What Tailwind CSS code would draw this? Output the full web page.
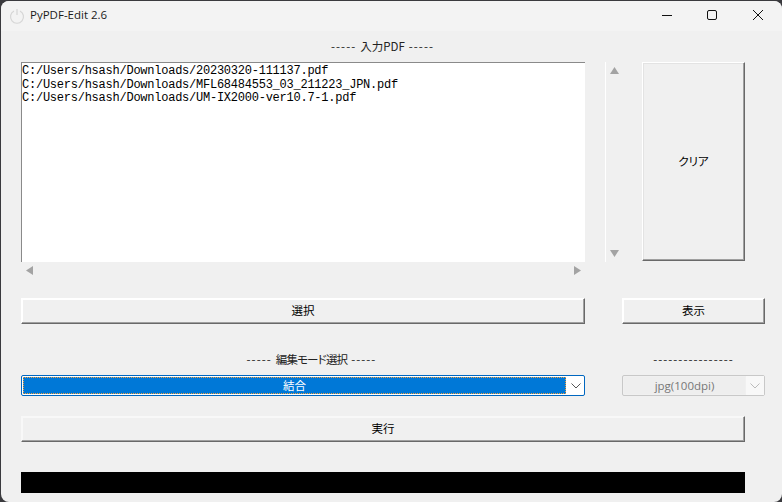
<!DOCTYPE html>
<html lang="ja">
<head>
  <meta charset="UTF-8" />
  <title>PyPDF-Edit 2.6</title>
  <script src="https://cdn.jsdelivr.net/npm/@tailwindcss/browser@4"></script>
</head>
<body class="w-[782px] h-[502px] overflow-hidden bg-[#3a3a3e] font-['Noto_Sans_CJK_JP','Noto_Sans',sans-serif] [font-feature-settings:'palt'] text-[12px] text-black">

  <div class="w-[781px] h-[501px] ml-px mt-px rounded-[8px] overflow-hidden bg-[#f0f0f0] flex flex-col">

    <!-- Title bar -->
    <header class="h-[30px] shrink-0 bg-[#f3f3f3] flex items-center">
      <svg class="ml-[8px] w-[16px] h-[16px]" viewBox="0 0 16 16" fill="none" stroke="#d6d6d6" stroke-width="1.2">
        <path d="M5 3 A6.5 6.5 0 1 0 11 3" />
        <path d="M8 1 V7" />
      </svg>
      <span class="ml-[5px] pb-[2px] font-['Open_Sans',sans-serif] text-[11.5px] text-[#1a1a1a] leading-none">PyPDF-Edit 2.6</span>
      <div class="ml-auto mr-px flex items-center">
        <svg class="w-[46px] h-[30px]" viewBox="0 0 46 30" fill="none" stroke="#111" stroke-width="1"><path d="M19 14.5 H29" /></svg>
        <svg class="w-[46px] h-[30px]" viewBox="0 0 46 30" fill="none" stroke="#111" stroke-width="1"><rect x="18.5" y="9.5" width="9" height="9" rx="1.5" /></svg>
        <svg class="w-[46px] h-[30px]" viewBox="0 0 46 30" fill="none" stroke="#111" stroke-width="1"><path d="M18 9 L28 19 M28 9 L18 19" /></svg>
      </div>
    </header>

    <main class="flex-1 pl-[20px] flex flex-col">
      <!-- Input heading -->
      <div class="h-[31px] pr-[38px] flex items-center justify-center text-[11.5px] leading-none text-[#222] pt-[1px]">
        <span class="tracking-[1.05px]">-----</span><span class="mx-[4px]">入力PDF</span><span class="tracking-[1.05px]">-----</span>
      </div>

      <!-- List + vertical scrollbar + clear button -->
      <div class="flex h-[200px]">
        <div class="w-[564px] border-t border-l border-t-[#8a8a8a] border-l-[#8a8a8a] bg-white font-['Liberation_Mono',monospace] text-[12px] tracking-[-0.24px] leading-[13.5px] pt-[2px] whitespace-nowrap overflow-hidden">
          <div>C:/Users/hsash/Downloads/20230320-111137.pdf</div>
          <div>C:/Users/hsash/Downloads/MFL68484553_03_211223_JPN.pdf</div>
          <div>C:/Users/hsash/Downloads/UM-IX2000-ver10.7-1.pdf</div>
        </div>
        <div class="w-[20px] ml-[20px] border-l border-white flex flex-col items-center justify-between py-[5px] pr-[2px]">
          <svg class="w-[9px] h-[7px]" viewBox="0 0 9 7" fill="#a3a3a3"><path d="M4.5 0 L9 7 H0 Z" /></svg>
          <svg class="w-[9px] h-[7px]" viewBox="0 0 9 7" fill="#a3a3a3"><path d="M0 0 H9 L4.5 7 Z" /></svg>
        </div>
        <button class="w-[103px] h-[199px] ml-[17px] bg-[#f0f0f0] border border-t-white border-l-white border-r-[#696969] border-b-[#696969] shadow-[inset_-1px_-1px_0_#a0a0a0,inset_1px_1px_0_#e3e3e3] text-[11.5px]">クリア</button>
      </div>

      <!-- Horizontal scrollbar -->
      <div class="w-[564px] h-[16px] flex items-center justify-between pl-[5px] pr-[4px]">
        <svg class="w-[7px] h-[9px]" viewBox="0 0 7 9" fill="#a3a3a3"><path d="M7 0 V9 L0 4.5 Z" /></svg>
        <svg class="w-[7px] h-[9px]" viewBox="0 0 7 9" fill="#a3a3a3"><path d="M0 0 L7 4.5 L0 9 Z" /></svg>
      </div>

      <!-- Select / show buttons -->
      <div class="flex mt-[20px] h-[26px]">
        <button class="w-[564px] bg-[#f0f0f0] border border-t-white border-l-white border-r-[#696969] border-b-[#696969] shadow-[inset_-1px_-1px_0_#a0a0a0,inset_1px_1px_0_#fff] text-[11.5px]">選択</button>
        <button class="w-[143px] ml-[37px] bg-[#f0f0f0] border border-t-white border-l-white border-r-[#696969] border-b-[#696969] shadow-[inset_-1px_-1px_0_#a0a0a0,inset_1px_1px_0_#fff] text-[11.5px]">表示</button>
      </div>

      <!-- Mode labels -->
      <div class="flex mt-[21px] h-[30px] items-center text-[11.5px] leading-none text-[#222] pb-[1px]">
        <div class="w-[581px] text-center">
          <span class="tracking-[1.05px]">-----</span><span class="mx-[4px] tracking-[-0.85px]">編集モード選択</span><span class="tracking-[1.05px]">-----</span>
        </div>
        <div class="w-[143px] ml-[20px] text-center tracking-[1.05px]">----------------</div>
      </div>

      <!-- Mode selects -->
      <div class="flex h-[21px]">
        <div class="w-[564px] border border-[#0067c0] rounded-[2px] bg-white flex items-stretch">
          <div class="flex-1 m-px bg-[#0078d7] border border-dotted border-[#f0a040] text-white text-[11.5px] flex items-center justify-center pt-[1px]">結合</div>
          <div class="w-[17px] flex items-center justify-center">
            <svg class="w-[10px] h-[6px]" viewBox="0 0 10 6" fill="none" stroke="#555" stroke-width="1"><path d="M0.5 0.5 L5 5 L9.5 0.5" /></svg>
          </div>
        </div>
        <div class="w-[143px] ml-[37px] border border-[#c8c8c8] rounded-[2px] flex items-stretch">
          <div class="flex-1 m-px bg-[#eeeeee] text-[#777] font-['Open_Sans',sans-serif] text-[11.5px] flex items-center justify-center">jpg(100dpi)</div>
          <div class="w-[18px] bg-[#f8f8f8] flex items-center justify-center">
            <svg class="w-[10px] h-[6px]" viewBox="0 0 10 6" fill="none" stroke="#bbb" stroke-width="1"><path d="M0.5 0.5 L5 5 L9.5 0.5" /></svg>
          </div>
        </div>
      </div>

      <!-- Run button -->
      <button class="w-[724px] h-[26px] mt-[20px] bg-[#f0f0f0] border border-t-[#f8f8f8] border-l-[#f8f8f8] border-r-[#696969] border-b-[#696969] shadow-[inset_-1px_-1px_0_#a0a0a0,inset_1px_1px_0_#f8f8f8] text-[11.5px]">実行</button>

      <!-- Progress bar -->
      <div class="w-[724px] h-[21px] mt-[30px] bg-black"></div>
    </main>
  </div>
</body>
</html>
